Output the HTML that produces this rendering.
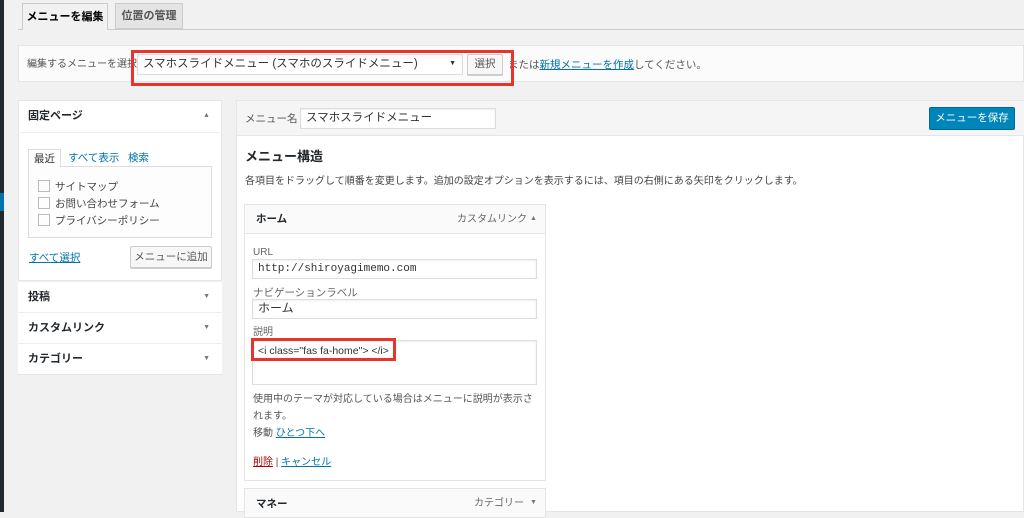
<!DOCTYPE html>
<html><head><meta charset="utf-8"><style>
*{box-sizing:border-box;margin:0;padding:0}
body{width:1024px;height:512px;overflow:hidden;background:#f1f1f1;font-family:"Liberation Sans","Noto Sans CJK JP",sans-serif;font-size:11px;line-height:1.15;color:#444;position:relative;white-space:nowrap}
.a{position:absolute}
.lnk{color:#0073aa;text-decoration:underline}
.inp{position:absolute;background:#fff;border:1px solid #ddd;box-shadow:inset 0 1px 2px rgba(0,0,0,.07);padding:0 5px;font-size:12px;color:#333;display:flex;align-items:center}
.btn{position:absolute;background:#f7f7f7;border:1px solid #ccc;border-radius:2px;box-shadow:0 1px 0 #ccc;display:flex;align-items:center;justify-content:center;color:#555;font-size:10.5px}
.sec{position:absolute;left:18px;width:204px;height:31px;border-top:1px solid #eee;background:#fff;font-weight:bold;font-size:11px;color:#23282d;padding-left:10px;display:flex;align-items:center}
.tri{position:absolute;right:12px;font-size:7px;color:#777;font-weight:normal}
</style></head><body>
<div class="a" style="left:0;top:0;width:4px;height:512px;background:#23282d"></div>
<div class="a" style="left:0;top:193px;width:4px;height:18px;background:#0073aa"></div>
<div class="a" style="left:18px;top:29px;width:1006px;height:1px;background:#ccc"></div>
<div class="a" style="left:22px;top:3px;width:86px;height:27px;background:#f1f1f1;border:1px solid #ccc;border-bottom:none;font-weight:bold;font-size:11px;color:#000;display:flex;align-items:center;justify-content:center">メニューを編集</div>
<div class="a" style="left:115px;top:3px;width:68px;height:26px;background:#e4e4e4;border:1px solid #ccc;font-weight:bold;font-size:11px;color:#555;display:flex;align-items:center;justify-content:center">位置の管理</div>
<div class="a" style="left:18px;top:45px;width:1006px;height:37px;background:#fbfbfb;border:1px solid #e5e5e5"></div>
<div class="a" style="left:27px;top:59px;font-size:10px;color:#555">編集するメニューを選択:</div>
<div class="inp" style="left:137px;top:54px;width:326px;height:21px;font-size:11.5px;color:#333">スマホスライドメニュー (スマホのスライドメニュー)<span style="position:absolute;right:6px;font-size:7px">▼</span></div>
<div class="btn" style="left:467px;top:54px;width:36px;height:21px">選択</div>
<div class="a" style="left:508px;top:59px;font-size:10.5px;color:#555">または<span class="lnk">新規メニューを作成</span>してください。</div>
<div class="a" style="left:131px;top:50px;width:383px;height:36px;border:3px solid #e8342b"></div>
<div class="a" style="left:18px;top:100px;width:204px;height:181px;background:#fff;border:1px solid #e5e5e5"></div>
<div class="a" style="left:28px;top:110px;font-weight:bold;font-size:11px;color:#23282d">固定ページ</div>
<div class="a" style="left:203px;top:112px;font-size:7px;color:#777">▲</div>
<div class="a" style="left:18px;top:132px;width:204px;height:1px;background:#eee"></div>
<div class="a" style="left:28px;top:166px;width:184px;height:72px;background:#fdfdfd;border:1px solid #ddd"></div>
<div class="a" style="left:28px;top:149px;width:33px;height:18px;background:#fdfdfd;border:1px solid #ddd;border-bottom:none;padding:3px 0 0 5px;color:#333;font-size:10.5px">最近</div>
<div class="a" style="left:68px;top:152px;color:#0073aa;font-size:10.5px">すべて表示</div>
<div class="a" style="left:128px;top:152px;color:#0073aa;font-size:10.5px">検索</div>
<div class="a" style="left:38px;top:179px;line-height:17px;font-size:10.5px;color:#444">
<div><span style="display:inline-block;width:12px;height:12px;border:1px solid #bbb;vertical-align:-2px;margin-right:5px"></span>サイトマップ</div>
<div><span style="display:inline-block;width:12px;height:12px;border:1px solid #bbb;vertical-align:-2px;margin-right:5px"></span>お問い合わせフォーム</div>
<div><span style="display:inline-block;width:12px;height:12px;border:1px solid #bbb;vertical-align:-2px;margin-right:5px"></span>プライバシーポリシー</div>
</div>
<div class="a lnk" style="left:29px;top:252px;font-size:10.5px">すべて選択</div>
<div class="btn" style="left:130px;top:246px;width:82px;height:22px">メニューに追加</div>
<div class="sec" style="top:281px">投稿<span class="tri">▼</span></div>
<div class="sec" style="top:312px">カスタムリンク<span class="tri">▼</span></div>
<div class="sec" style="top:343px;height:32px;border-bottom:1px solid #e5e5e5">カテゴリー<span class="tri">▼</span></div>
<div class="a" style="left:236px;top:100px;width:788px;height:412px;background:#fff;border:1px solid #e5e5e5"></div>
<div class="a" style="left:237px;top:101px;width:787px;height:35px;background:#f5f5f5;border-bottom:1px solid #e5e5e5"></div>
<div class="a" style="left:245px;top:113px;color:#555;font-size:10.5px">メニュー名</div>
<div class="inp" style="left:300px;top:108px;width:196px;height:21px;font-size:11.5px">スマホスライドメニュー</div>
<div class="a" style="left:929px;top:107px;width:86px;height:23px;background:#0085ba;border:1px solid #006799;border-radius:2px;color:#fff;display:flex;align-items:center;justify-content:center;font-size:10.5px">メニューを保存</div>
<div class="a" style="left:245px;top:150px;font-weight:bold;font-size:13px;color:#23282d">メニュー構造</div>
<div class="a" style="left:245px;top:176px;font-size:10px;color:#444">各項目をドラッグして順番を変更します。追加の設定オプションを表示するには、項目の右側にある矢印をクリックします。</div>
<div class="a" style="left:244px;top:204px;width:302px;height:277px;background:#fff;border:1px solid #e5e5e5"></div>
<div class="a" style="left:245px;top:205px;width:300px;height:29px;background:#fafafa;border-bottom:1px solid #e5e5e5"></div>
<div class="a" style="left:256px;top:213px;font-weight:bold;font-size:10.5px;color:#23282d">ホーム</div>
<div class="a" style="left:457px;top:214px;font-size:10px;color:#666">カスタムリンク</div>
<div class="a" style="left:530px;top:215px;font-size:7px;color:#777">▲</div>
<div class="a" style="left:253px;top:247px;font-size:10px;color:#666">URL</div>
<div class="inp" style="left:252px;top:259px;width:285px;height:20px;font-family:'Liberation Mono',monospace;font-size:11px">http://shiroyagimemo.com</div>
<div class="a" style="left:253px;top:287px;font-size:10.5px;color:#666">ナビゲーションラベル</div>
<div class="inp" style="left:252px;top:299px;width:285px;height:20px">ホーム</div>
<div class="a" style="left:253px;top:327px;font-size:10px;color:#666">説明</div>
<div class="inp" style="left:252px;top:340px;width:285px;height:45px;align-items:flex-start;padding-top:4px;font-size:10.5px">&lt;i class="fas fa-home"&gt; &lt;/i&gt;</div>
<div class="a" style="left:251px;top:338px;width:145px;height:23px;border:3px solid #e8342b"></div>
<div class="a" style="left:253px;top:391px;width:286px;font-size:10px;line-height:17px;color:#555;white-space:normal">使用中のテーマが対応している場合はメニューに説明が表示されます。</div>
<div class="a" style="left:253px;top:428px;font-size:10px;color:#555">移動 <span class="lnk">ひとつ下へ</span></div>
<div class="a" style="left:253px;top:457px;font-size:10px;color:#555"><span style="color:#a00;text-decoration:underline">削除</span> | <span class="lnk">キャンセル</span></div>
<div class="a" style="left:244px;top:488px;width:302px;height:30px;background:#fafafa;border:1px solid #e5e5e5"></div>
<div class="a" style="left:256px;top:498px;font-weight:bold;font-size:10.5px;color:#23282d">マネー</div>
<div class="a" style="left:474px;top:498px;font-size:10px;color:#666">カテゴリー</div>
<div class="a" style="left:530px;top:499px;font-size:7px;color:#777">▼</div>
</body></html>
